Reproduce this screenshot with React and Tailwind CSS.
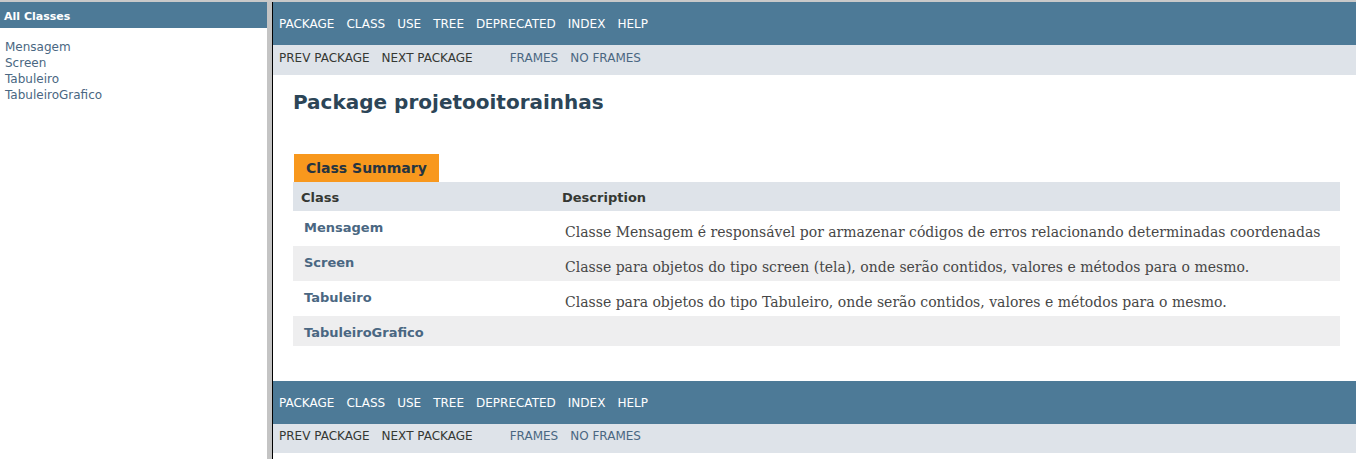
const navItems = ["Package", "Class", "Use", "Tree", "Deprecated", "Index", "Help"];

const classes = [
  {
    name: "Mensagem",
    desc: "Classe Mensagem é responsável por armazenar códigos de erros relacionando determinadas coordenadas",
  },
  {
    name: "Screen",
    desc: "Classe para objetos do tipo screen (tela), onde serão contidos, valores e métodos para o mesmo.",
  },
  {
    name: "Tabuleiro",
    desc: "Classe para objetos do tipo Tabuleiro, onde serão contidos, valores e métodos para o mesmo.",
  },
  { name: "TabuleiroGrafico", desc: null },
];

function TopNav() {
  return (
    <div className="h-[43px] bg-[#4d7a97] pl-[6px] pt-[14px]">
      <ul className="flex gap-[12px] text-[12px] leading-[16px] uppercase text-white">
        {navItems.map((item) => (
          <li key={item}>{item}</li>
        ))}
      </ul>
    </div>
  );
}

function SubNav({ tall }) {
  return (
    <div className={`${tall ? "h-[30px] pt-[5px]" : "h-[29px] pt-[4px]"} bg-[#dee3e9] pl-[6px] flex text-[12px] leading-[16px] uppercase`}>
      <ul className="flex gap-[12px] text-[#353833]">
        <li>Prev Package</li>
        <li>Next Package</li>
      </ul>
      <ul className="flex gap-[12px] ml-[37px] text-[#4a6782]">
        <li>Frames</li>
        <li>No Frames</li>
      </ul>
    </div>
  );
}

export default function App() {
  return (
    <div
      className="w-[1356px] h-[459px] flex border-t-2 border-[#c9c9c9] bg-white overflow-hidden"
      style={{ fontFamily: "'DejaVu Sans', Arial, sans-serif" }}
    >
      {/* left frame: all classes */}
      <div className="w-[272px] shrink-0 border-r-[5px] border-[#c4c4c4] bg-white">
        <h1 className="h-[26px] bg-[#4d7a97] pl-[4px] pt-[8px] text-[11px] leading-[14px] font-bold text-white">
          All Classes
        </h1>
        <ul className="pt-[11px] pl-[5px] text-[12px] leading-[16px] text-[#4a6782]">
          {classes.map((c) => (
            <li key={c.name}>{c.name}</li>
          ))}
        </ul>
      </div>

      {/* right frame */}
      <div className="flex-1 border-l border-black text-[#353833]">
        <TopNav />
        <SubNav tall />

        <div className="pl-[20px] pr-[16px]">
          <h2 className="pt-[15px] text-[20px] leading-[24px] font-bold text-[#2c4557]">
            Package projetooitorainhas
          </h2>

          <div className="mt-[40px] ml-[1px] w-[145px] h-[28px] bg-[#f8981d] pl-[12px] pt-[5px] text-[14px] leading-[18px] font-bold text-[#253441]">
            Class Summary
          </div>

          <div>
            <div className="flex h-[29px] bg-[#dee3e9] pt-[8px] text-[13px] leading-[16px] font-bold">
              <div className="w-[261px] pl-[8px]">Class</div>
              <div className="pl-[8px]">Description</div>
            </div>
            {classes.map((c, i) => (
              <div
                key={c.name}
                className={`flex items-start ${i % 2 === 0 ? "bg-white" : "bg-[#eeeeef]"}`}
              >
                <div className="w-[261px] shrink-0 pl-[11px] pt-[9px] pb-[5px] text-[13px] leading-[16px] font-bold text-[#4a6782]">
                  {c.name}
                </div>
                {c.desc && (
                  <div
                    className="pl-[11px] pt-[12px] pb-[5px] text-[14px] leading-[18px] text-[#474747]"
                    style={{ fontFamily: "'DejaVu Serif', Georgia, serif" }}
                  >
                    {c.desc}
                  </div>
                )}
              </div>
            ))}
          </div>
        </div>

        <div className="mt-[35px]">
          <TopNav />
          <SubNav />
        </div>
      </div>
    </div>
  );
}
